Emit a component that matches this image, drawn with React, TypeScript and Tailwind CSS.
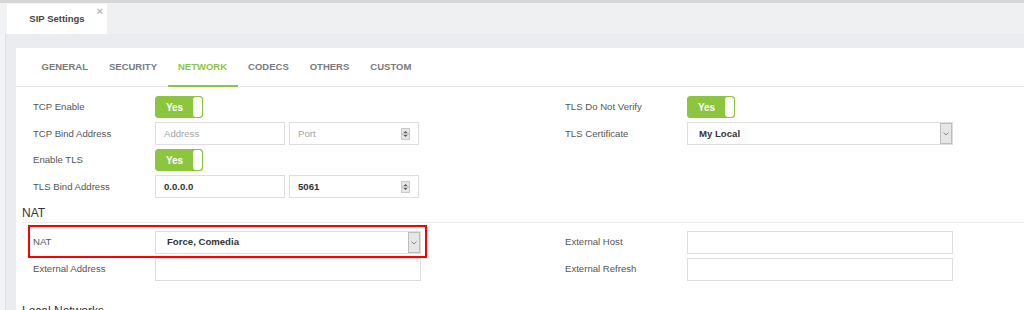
import React from "react";

function Toggle() {
  return (
    <div className="flex h-[22px] w-[48px] overflow-hidden rounded-[3px] border border-[#8cc63f] bg-[#8cc63f]">
      <div className="flex flex-1 items-center justify-center text-[10px] font-bold text-white">Yes</div>
      <div className="w-[9px] rounded-[3px] bg-white" />
    </div>
  );
}

function Spinner() {
  return (
    <svg width="9" height="12" viewBox="0 0 9 12" className="shrink-0">
      <rect x="0.5" y="0.5" width="8" height="11" fill="#e6e6e6" stroke="#c9c9c9" />
      <polygon points="2.5,5 4.5,3 6.5,5" fill="#555" />
      <line x1="1" y1="6" x2="8" y2="6" stroke="#aaa" />
      <polygon points="2.5,7 4.5,9 6.5,7" fill="#555" />
    </svg>
  );
}

function Input({
  w,
  placeholder,
  value,
  spinner,
}: {
  w: string;
  placeholder?: string;
  value?: string;
  spinner?: boolean;
}) {
  return (
    <div className={`flex h-[23px] items-center border border-[#dedede] bg-white pl-[8px] pr-[8px] ${w}`}>
      <span
        className={`flex-1 text-[9.6px] ${value ? "font-bold text-[#333]" : "text-[#a5a5a5]"}`}
      >
        {value ?? placeholder ?? ""}
      </span>
      {spinner && <Spinner />}
    </div>
  );
}

function Select({ w, value }: { w: string; value: string }) {
  return (
    <div className={`flex h-[23px] items-stretch border border-[#dedede] bg-white ${w}`}>
      <span className="flex flex-1 items-center pl-[11px] text-[9.6px] font-bold text-[#333]">{value}</span>
      <div className="flex w-[12px] items-center justify-center border border-[#bdbdbd] bg-[#e6e6e6]">
        <svg width="6" height="4" viewBox="0 0 6 4">
          <polyline points="0.5,0.5 3,3 5.5,0.5" fill="none" stroke="#888" strokeWidth="1" />
        </svg>
      </div>
    </div>
  );
}

function Row({ label, h = "h-[26.5px]", children }: { label: string; h?: string; children?: React.ReactNode }) {
  return (
    <div className={`flex items-center ${h}`}>
      <div className="w-[122px] shrink-0 text-[9.6px] text-[#555]">{label}</div>
      {children}
    </div>
  );
}

const tabs = ["GENERAL", "SECURITY", "NETWORK", "CODECS", "OTHERS", "CUSTOM"];

export default function App() {
  return (
    <div className="flex h-[310px] w-[1024px] flex-col overflow-hidden bg-[#eceef1] font-['Liberation_Sans',Arial,sans-serif]">
      {/* top bar */}
      <div className="h-[3px] shrink-0 bg-[#d6d6d6]" />
      <div className="h-[1px] shrink-0 bg-[#f2f2f2]" />
      {/* tab row */}
      <div className="flex h-[30px] shrink-0">
        <div className="w-[7px] bg-[#f1f2f4]" />
        <div className="relative flex w-[100px] items-center justify-center bg-white">
          <span className="text-[9.5px] font-bold text-[#444]">SIP Settings</span>
          <span className="absolute right-[4px] top-[2px] text-[11px] font-bold leading-none text-[#b5b5b5]">×</span>
        </div>
        <div className="flex-1 bg-[#eef0f2]" />
      </div>
      {/* main */}
      <div className="flex min-h-0 flex-1">
        <div className="w-[6px] shrink-0 border-r border-[#dcdfe3] bg-[#f3f4f6]" />
        <div className="flex min-w-0 flex-1 flex-col bg-[#eaecef] pl-[10px] pt-[14px]">
          <div className="flex-1 bg-white">
            {/* tabs */}
            <div className="flex h-[39px] border-b border-[#e6e6e6] pl-[15px]">
              {tabs.map((t) =>
                t === "NETWORK" ? (
                  <div
                    key={t}
                    className="-mb-px flex items-center border-b-2 border-[#8cc63f] px-[10.5px] pt-[2px] text-[9.5px] font-bold text-[#8cc63f]"
                  >
                    {t}
                  </div>
                ) : (
                  <div key={t} className="flex items-center px-[10.5px] text-[9.5px] font-bold text-[#7a7a7a]">
                    {t}
                  </div>
                )
              )}
            </div>
            {/* form */}
            <div className="pl-[6px] pt-[7px]">
              <div className="flex pl-[11px]">
                <div className="w-[532px] shrink-0">
                  <Row label="TCP Enable">
                    <Toggle />
                  </Row>
                  <Row label="TCP Bind Address">
                    <div className="flex gap-[4px]">
                      <Input w="w-[130px]" placeholder="Address" />
                      <Input w="w-[130px]" placeholder="Port" spinner />
                    </div>
                  </Row>
                  <Row label="Enable TLS">
                    <Toggle />
                  </Row>
                  <Row label="TLS Bind Address">
                    <div className="flex gap-[4px]">
                      <Input w="w-[130px]" value="0.0.0.0" />
                      <Input w="w-[130px]" value="5061" spinner />
                    </div>
                  </Row>
                </div>
                <div className="w-[532px] shrink-0">
                  <Row label="TLS Do Not Verify">
                    <Toggle />
                  </Row>
                  <Row label="TLS Certificate">
                    <Select w="w-[266px]" value="My Local" />
                  </Row>
                </div>
              </div>

              {/* NAT heading */}
              <div className="mt-[3px] flex h-[20px] items-center border-b border-[#ececec] text-[12px] text-[#333]">
                NAT
              </div>
              <div className="relative mt-[6px] flex pl-[11px]">
                <div className="w-[532px] shrink-0">
                  <Row label="NAT" h="h-[27px]">
                    <Select w="w-[266px]" value="Force, Comedia" />
                  </Row>
                  <Row label="External Address" h="h-[27px]">
                    <Input w="w-[266px]" />
                  </Row>
                </div>
                <div className="w-[532px] shrink-0">
                  <Row label="External Host" h="h-[27px]">
                    <Input w="w-[266px]" />
                  </Row>
                  <Row label="External Refresh" h="h-[27px]">
                    <Input w="w-[266px]" />
                  </Row>
                </div>
                <div className="pointer-events-none absolute left-[6px] top-[-4px] h-[33px] w-[399px] border-2 border-[#ff0000]" />
              </div>

              <div className="mt-[18px] flex h-[20px] items-center text-[12px] text-[#333]">Local Networks</div>
            </div>
          </div>
        </div>
      </div>
    </div>
  );
}
